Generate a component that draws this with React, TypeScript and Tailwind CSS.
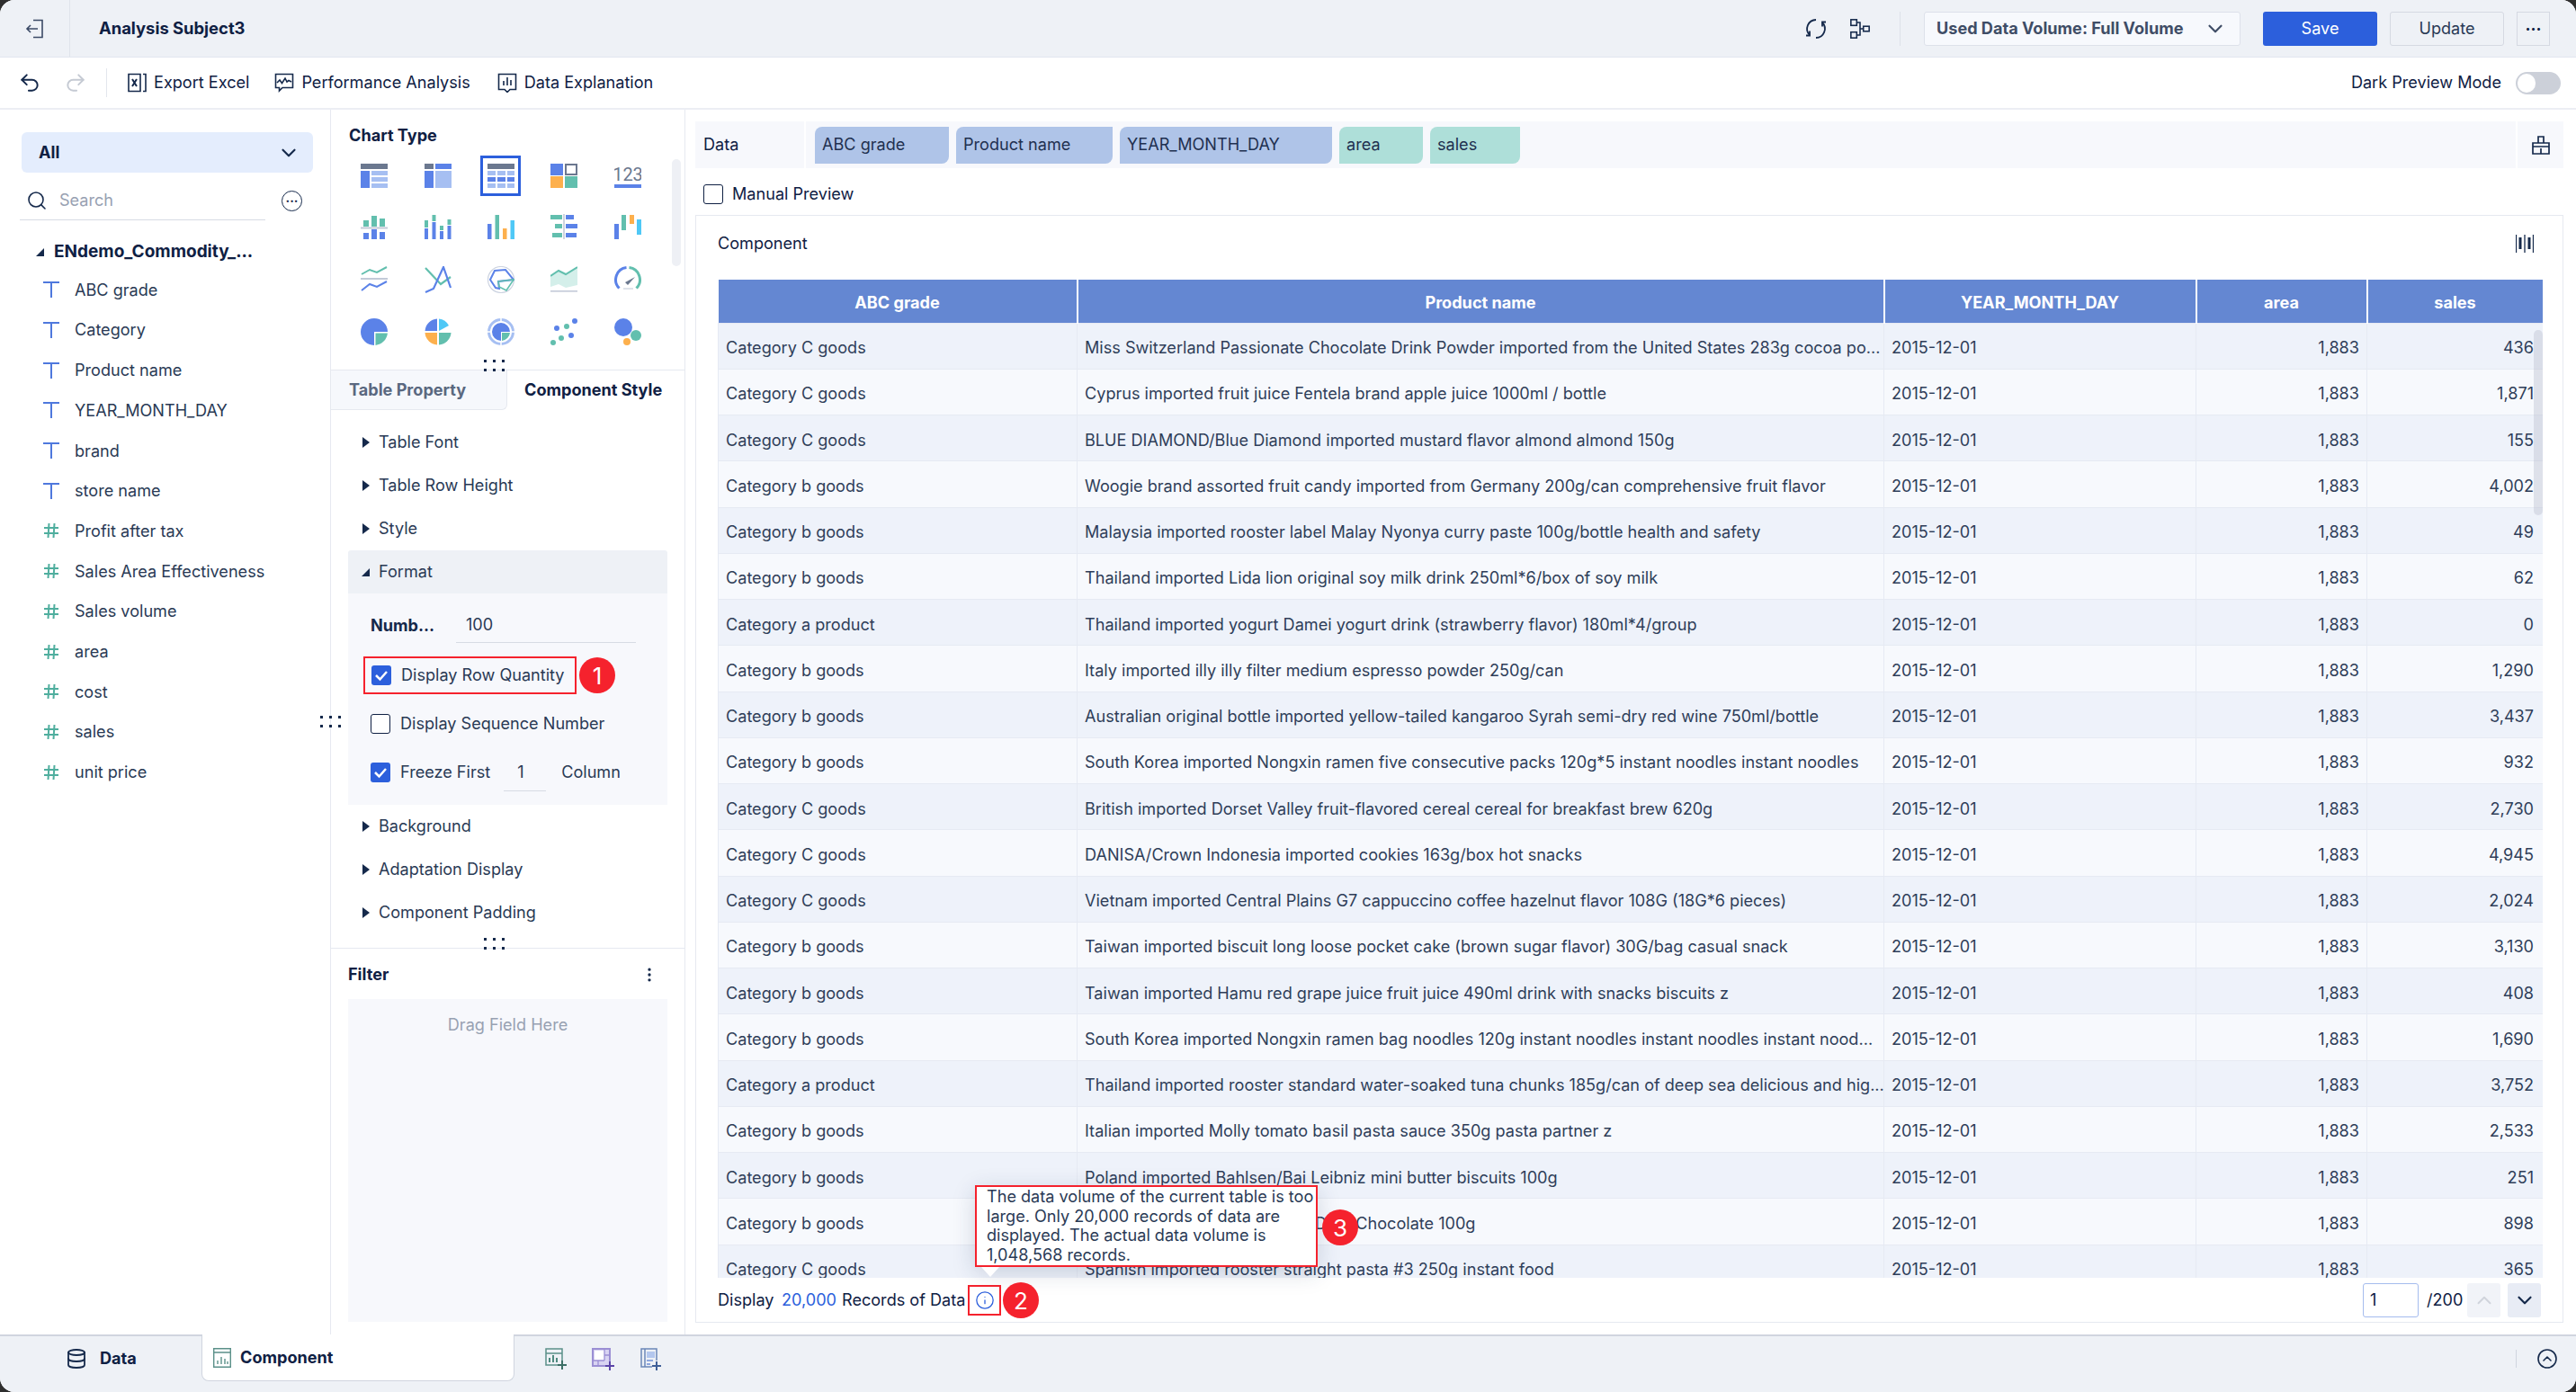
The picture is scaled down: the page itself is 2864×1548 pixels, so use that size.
import type { ReactNode } from 'react'
import { ChevronDown, ChevronUp, Search, Undo2, Redo2, Database, Info, CircleChevronUp, EllipsisVertical } from 'lucide-react'

const B = '#5b82e8'
const L = '#a6bff2'
const G = '#6b788f'
const T = '#62bfae'
const O = '#fdb04d'
const C = '#4fc8f6'

const chartIcons: ReactNode[] = [
  <><rect width="30" height="6" y="1" fill={G} /><rect y="9" width="10" height="19" fill={B} /><rect x="12" y="9" width="18" height="5" fill={L} /><rect x="12" y="16" width="18" height="5" fill={L} /><rect x="12" y="23" width="18" height="5" fill={L} /></>,
  <><rect y="1" width="10" height="6" fill={G} /><rect x="12" y="1" width="18" height="6" fill={B} /><rect y="9" width="10" height="19" fill={B} /><rect x="12" y="9" width="18" height="19" fill={L} /></>,
  <><rect width="30" height="6" y="1" fill={G} />{[9, 16, 23].map(y => [0, 11, 22].map(x => <rect key={`${x}-${y}`} x={x} y={y} width="9" height="5" fill={y === 16 ? B : L} />))}</>,
  <><rect y="1" width="14" height="13" fill={B} /><rect x="17" y="2" width="12" height="11" fill="none" stroke={G} strokeWidth="2" /><rect y="15" width="14" height="13" fill={O} /><rect x="16" y="15" width="14" height="13" fill={T} /></>,
  <><text x="15" y="20" textAnchor="middle" fontSize="20" fill={G} fontFamily="Roboto, sans-serif">123</text><rect y="24" width="30" height="4" fill={B} /></>,
  <><rect x="3" y="7" width="6" height="7" fill={T} /><rect x="12" y="2" width="6" height="12" fill={T} /><rect x="21" y="5" width="6" height="9" fill={T} /><rect y="14.500" width="30" height="2" fill="#c3cad8" /><rect x="3" y="21" width="6" height="7" fill={B} /><rect x="12" y="17" width="6" height="11" fill={B} /><rect x="21" y="20" width="6" height="8" fill={B} /></>,
  <><rect y="7" width="4" height="8" fill={T} /><rect y="16" width="4" height="12" fill={B} /><rect x="8.500" y="1" width="4" height="7" fill={T} /><rect x="8.500" y="9" width="4" height="19" fill={B} /><rect x="17" y="13" width="4" height="5" fill={T} /><rect x="17" y="19" width="4" height="9" fill={B} /><rect x="25.500" y="6" width="4" height="6" fill={T} /><rect x="25.500" y="13" width="4" height="15" fill={B} /></>,
  <><rect y="11" width="4.500" height="17" fill={B} /><rect x="8.500" y="1" width="4.500" height="27" fill={T} /><rect x="17" y="16" width="4.500" height="12" fill={O} /><rect x="25.500" y="7" width="4.500" height="21" fill={C} /></>,
  <><rect y="1" width="13" height="5" fill={T} /><rect x="17" y="1" width="9" height="5" fill={B} /><rect x="5" y="11" width="8" height="5" fill={T} /><rect x="17" y="11" width="13" height="5" fill={B} /><rect x="2" y="21" width="11" height="5" fill={T} /><rect x="17" y="21" width="12" height="5" fill={B} /><rect x="14.200" width="1.600" height="28" fill="#c3cad8" /></>,
  <><rect y="11" width="5" height="17" fill={B} /><rect x="8" y="1" width="5" height="17" fill={T} /><rect x="17" y="1" width="5" height="10" fill={O} /><rect x="25" y="6" width="5" height="17" fill={C} /></>,
  <><path d="M1 9l9-5 8 3 11-6" fill="none" stroke={T} strokeWidth="2" /><rect y="13" width="30" height="2" fill="#c3cad8" /><path d="M1 27l9-7 8 3 11-6" fill="none" stroke={B} strokeWidth="2" /></>,
  <><path d="M1 2l17 18 11-8" fill="none" stroke={T} strokeWidth="2.200" /><path d="M1 29l9-4 11-24 8 23" fill="none" stroke={B} strokeWidth="2.200" /></>,
  <><circle cx="15" cy="15" r="14.500" fill="none" stroke="#ccd3e0" strokeWidth="1.200" /><path d="M3 15L8 5 20 4 29 15 12 17 13 25 9 24z" fill="none" stroke={B} strokeWidth="2" /><path d="M12 17L29 15 21 27 13 23z" fill="none" stroke={T} strokeWidth="1.600" /></>,
  <><path d="M0 11l9-6 8 4 13-8v20l-13 3-8-4-9 3z" fill="#d4efea" /><path d="M0 11l9-6 8 4 13-8" fill="none" stroke={T} strokeWidth="2" /><rect y="27" width="30" height="1.600" fill="#c3cad8" /></>,
  <><path d="M5.500 24.500A13.500 13.500 0 0 1 13.500 1.600" fill="none" stroke={B} strokeWidth="3" /><path d="M16.500 1.600A13.500 13.500 0 0 1 24.500 24.500" fill="none" stroke={T} strokeWidth="3" /><path d="M12 18l11-6-8 9z" fill={G} /><rect x="10" y="24" width="11" height="2" fill="#dfe3ea" /></>,
  <><path d="M15 0A15 15 0 1 0 15 30V15H30A15 15 0 0 0 15 0Z" fill={B} /><path d="M16.500 16.500H29.900A15 15 0 0 1 16.500 29.900Z" fill={T} /></>,
  <><path d="M14 .500A14.500 14.500 0 0 0 .500 14H14z" fill={B} /><path d="M16 .500A14.500 14.500 0 0 1 27 8l-11 6z" fill={C} /><path d="M.500 16A14.500 14.500 0 0 0 14 29.500V16z" fill={O} /><path d="M16 16H29.500A14.500 14.500 0 0 1 16 29.500z" fill={T} /></>,
  <><circle cx="15" cy="15" r="13.500" fill="none" stroke={L} strokeWidth="3" /><path d="M15 5A10 10 0 1 0 15 25V15H25A10 10 0 0 0 15 5Z" fill={B} /><path d="M16 16H25A10 10 0 0 1 16 25z" fill={T} /><path d="M15 0v3M15 27v3M0 15h3M27 15h3" stroke="#fff" strokeWidth="1.500" /></>,
  <><circle cx="27" cy="3" r="3" fill={B} /><circle cx="18" cy="9" r="3" fill={T} /><circle cx="7" cy="11" r="3" fill={B} /><circle cx="23" cy="19" r="3" fill={B} /><circle cx="12" cy="22" r="3" fill={T} /><circle cx="3" cy="27" r="3" fill={T} /></>,
  <><circle cx="10" cy="10" r="10" fill={B} /><circle cx="24" cy="19" r="6" fill={T} /><circle cx="14" cy="26" r="4" fill={O} /></>,
]

const fields = [
  ['T', 'ABC grade'], ['T', 'Category'], ['T', 'Product name'], ['T', 'YEAR_MONTH_DAY'], ['T', 'brand'], ['T', 'store name'],
  ['#', 'Profit after tax'], ['#', 'Sales Area Effectiveness'], ['#', 'Sales volume'], ['#', 'area'], ['#', 'cost'], ['#', 'sales'], ['#', 'unit price'],
]

const rows = [
  ['Category C goods', 'Miss Switzerland Passionate Chocolate Drink Powder imported from the United States 283g cocoa po...', '436'],
  ['Category C goods', 'Cyprus imported fruit juice Fentela brand apple juice 1000ml / bottle', '1,871'],
  ['Category C goods', 'BLUE DIAMOND/Blue Diamond imported mustard flavor almond almond 150g', '155'],
  ['Category b goods', 'Woogie brand assorted fruit candy imported from Germany 200g/can comprehensive fruit flavor', '4,002'],
  ['Category b goods', 'Malaysia imported rooster label Malay Nyonya curry paste 100g/bottle health and safety', '49'],
  ['Category b goods', 'Thailand imported Lida lion original soy milk drink 250ml*6/box of soy milk', '62'],
  ['Category a product', 'Thailand imported yogurt Damei yogurt drink (strawberry flavor) 180ml*4/group', '0'],
  ['Category b goods', 'Italy imported illy illy filter medium espresso powder 250g/can', '1,290'],
  ['Category b goods', 'Australian original bottle imported yellow-tailed kangaroo Syrah semi-dry red wine 750ml/bottle', '3,437'],
  ['Category b goods', 'South Korea imported Nongxin ramen five consecutive packs 120g*5 instant noodles instant noodles', '932'],
  ['Category C goods', 'British imported Dorset Valley fruit-flavored cereal cereal for breakfast brew 620g', '2,730'],
  ['Category C goods', 'DANISA/Crown Indonesia imported cookies 163g/box hot snacks', '4,945'],
  ['Category C goods', 'Vietnam imported Central Plains G7 cappuccino coffee hazelnut flavor 108G (18G*6 pieces)', '2,024'],
  ['Category b goods', 'Taiwan imported biscuit long loose pocket cake (brown sugar flavor) 30G/bag casual snack', '3,130'],
  ['Category b goods', 'Taiwan imported Hamu red grape juice fruit juice 490ml drink with snacks biscuits z', '408'],
  ['Category b goods', 'South Korea imported Nongxin ramen bag noodles 120g instant noodles instant noodles instant nood...', '1,690'],
  ['Category a product', 'Thailand imported rooster standard water-soaked tuna chunks 185g/can of deep sea delicious and hig...', '3,752'],
  ['Category b goods', 'Italian imported Molly tomato basil pasta sauce 350g pasta partner z', '2,533'],
  ['Category b goods', 'Poland imported Bahlsen/Bai Leibniz mini butter biscuits 100g', '251'],
  ['Category b goods', 'German imported Ritter Sport Dark Chocolate 100g', '898'],
  ['Category C goods', 'Spanish imported rooster straight pasta #3 250g instant food', '365'],
]

function Badge({ n, className }: { n: number; className: string }) {
  return (
    <div className={`absolute w-[40px] h-[40px] rounded-full bg-[#f5222d] text-white text-[26px] flex items-center justify-center ${className}`}>
      {n}
    </div>
  )
}

function Checkbox({ checked }: { checked?: boolean }) {
  return checked ? (
    <span className="w-[22px] h-[22px] rounded-[3px] bg-[#2c5fdc] flex items-center justify-center shrink-0">
      <svg width="16" height="14" viewBox="0 0 16 14"><path d="M2 7l4.500 4.500L14 3" fill="none" stroke="#fff" strokeWidth="2.500" /></svg>
    </span>
  ) : (
    <span className="w-[22px] h-[22px] rounded-[3px] border border-[#0f2043] bg-white shrink-0" />
  )
}

function Arrow({ open }: { open?: boolean }) {
  return open ? (
    <svg width="9" height="10" viewBox="0 0 9 10"><path d="M9 1v9H0z" fill="#15294b" /></svg>
  ) : (
    <svg width="8" height="12" viewBox="0 0 8 12"><path d="M0 0l8 6-8 6z" fill="#15294b" /></svg>
  )
}

function Collapse({ label }: { label: string }) {
  return (
    <div className="h-[48px] flex items-center pl-[16px] text-[#2a3a55]">
      <span className="w-[18px]"><Arrow /></span>
      {label}
    </div>
  )
}

function DragDots({ className }: { className: string }) {
  return (
    <div className={`absolute grid grid-cols-3 gap-x-[7px] gap-y-[7px] ${className}`}>
      {[0, 1, 2, 3, 4, 5].map(i => <span key={i} className="w-[3px] h-[3px] bg-[#15294b]" />)}
    </div>
  )
}

export default function App() {
  return (
    <div className="w-[2864px] h-[1548px] bg-[#2e2e2e] overflow-hidden font-['Inter',sans-serif] text-[18.1px] text-[#0f2043]">
      <div className="w-full h-full rounded-[16px] overflow-hidden bg-white flex flex-col">
        {/* Title bar */}
        <div className="h-[64px] shrink-0 bg-[#eef1f6] border-b border-[#e2e6ef] flex items-center">
          <div className="w-[78px] h-full border-r border-[#dfe3eb] flex items-center justify-center">
            <svg width="22" height="22" viewBox="0 0 22 22" fill="none" stroke="#3b4a66" strokeWidth="1.600"><path d="M9 1.500h10v19H9M14 11H2M6 7l-4 4 4 4" /></svg>
          </div>
          <span className="ml-[32px] font-bold text-[18.4px]">Analysis Subject3</span>
          <div className="ml-auto flex items-center h-full">
            <svg width="26" height="26" viewBox="0 0 26 26" fill="none" stroke="#15294b" strokeWidth="1.800"><path d="M13 3a10 10 0 0 0-7 17M13 23a10 10 0 0 0 7-17" /><path d="M6 15.500V20.500H2M20 10.500V5.500h4" /></svg>
            <svg className="ml-[24px]" width="24" height="24" viewBox="0 0 26 26" fill="none" stroke="#15294b" strokeWidth="1.700"><rect x="2" y="2" width="7" height="7" /><rect x="2" y="17" width="7" height="7" /><rect x="17" y="10" width="7" height="6" /><path d="M9 5.500h4v15H9M13 13h4" /></svg>
            <div className="ml-[32px] w-px h-[38px] bg-[#dde1e9]" />
            <div className="ml-[26px] w-[352px] h-[38px] bg-[#f7f9fd] border border-[#dde1ea] rounded-[3px] flex items-center pl-[13px] pr-[14px] text-[#3f4d66] font-bold">
              Used Data Volume: Full Volume
              <ChevronDown className="ml-auto" size={26} color="#3f4d66" />
            </div>
            <button className="ml-[25px] w-[127px] h-[38px] bg-[#2c5fdc] text-white rounded-[3px]">Save</button>
            <button className="ml-[14px] w-[127px] h-[38px] border border-[#d5d9e2] rounded-[3px] text-[#2a3a55]">Update</button>
            <button className="ml-[14px] w-[37px] h-[38px] border border-[#d5d9e2] font-bold leading-none pb-[8px]">...</button>
            <div className="w-[29px]" />
          </div>
        </div>

        {/* Toolbar */}
        <div className="h-[58px] shrink-0 border-b-2 border-[#eceef4] flex items-center">
          <Undo2 className="ml-[20px]" size={26} color="#15294b" strokeWidth={1.800} />
          <Redo2 className="ml-[25px]" size={26} color="#c5cad3" strokeWidth={1.800} />
          <div className="ml-[21px] w-px h-[32px] bg-[#e3e6ed]" />
          <svg className="ml-[22px]" width="22" height="22" viewBox="0 0 22 22" fill="none" stroke="#15294b" strokeWidth="1.600"><path d="M15 1.500H2v19h13zM18 1.500h3v19h-3" /><path d="M6 7l5 8M11 7l-5 8" strokeWidth="2" /></svg>
          <span className="ml-[8px]">Export Excel</span>
          <svg className="ml-[28px]" width="22" height="22" viewBox="0 0 22 22" fill="none" stroke="#15294b" strokeWidth="1.600"><path d="M1.500 1.500h19v15H9l-3.500 3.500v-3.500h-4zM3 11l3-3 2.500 3.500L12 6l2 4 2-1.500 3 1.500" /></svg>
          <span className="ml-[8px]">Performance Analysis</span>
          <svg className="ml-[30px]" width="22" height="22" viewBox="0 0 22 22" fill="none" stroke="#15294b" strokeWidth="1.600"><path d="M1.500 1.500h19v17H14l-3 3-3-3H1.500zM7 9v5M11 5v9M15 8v6" /></svg>
          <span className="ml-[8px]">Data Explanation</span>
          <span className="ml-auto">Dark Preview Mode</span>
          <div className="ml-[16px] mr-[17px] w-[50px] h-[25px] rounded-full bg-[#ccd0d9] flex items-center pl-[2px]">
            <span className="w-[20px] h-[21px] rounded-full bg-white" />
          </div>
        </div>

        {/* Main */}
        <div className="flex-1 flex min-h-0">
          {/* Field panel */}
          <div className="relative w-[368px] shrink-0 border-r border-[#e6e9f0] pt-[25px]">
            <div className="mx-[24px] w-[324px] h-[45px] bg-[#e4edfd] rounded-[6px] flex items-center pl-[19px] pr-[14px] font-bold">
              All
              <ChevronDown className="ml-auto" size={26} color="#15294b" />
            </div>
            <div className="mt-[9px] ml-[22px] flex items-center">
              <div className="w-[273px] h-[44px] border-b border-[#d7dbe4] flex items-center pl-[7px]">
                <Search size={24} color="#15294b" strokeWidth={1.600} />
                <span className="ml-[13px] text-[#98a1b2]">Search</span>
              </div>
              <div className="ml-[18px] w-[23px] h-[23px] rounded-full border-[1.5px] border-[#15294b] flex items-center justify-center text-[14px] leading-none pb-[6px] font-bold">...</div>
            </div>
            <div className="mt-[14px] h-[42px] flex items-center pl-[40px] font-bold text-[19px]">
              <span className="w-[20px]"><Arrow open /></span>ENdemo_Commodity_...
            </div>
            {fields.map(([t, name]) => (
              <div key={name} className="h-[44.7px] flex items-center pl-[46px] text-[#2a3a55] -translate-y-[1px]">
                {t === 'T' ? (
                  <svg className="w-[22px] mr-[15px]" width="20" height="20" viewBox="0 0 20 20" fill="none" stroke="#4e78dd" strokeWidth="2"><path d="M1 2h18M10 2v17" /></svg>
                ) : (
                  <svg className="w-[22px] mr-[15px]" width="20" height="20" viewBox="0 0 20 20" fill="none" stroke="#4fae9e" strokeWidth="2"><path d="M2 7h16M2 13h16M7.500 2l-1 16M13.500 2l-1 16" /></svg>
                )}
                {name}
              </div>
            ))}
            <DragDots className="top-[674px] right-[-12px]" />
          </div>

          {/* Settings panel */}
          <div className="w-[394px] shrink-0 border-r border-[#e6e9f0] flex flex-col">
            <div className="relative h-[289px] shrink-0 pt-[15px] pl-[13px]">
              <div className="h-[28px] ml-[7px] flex items-center font-bold">Chart Type</div>
              <div className="mt-[2px] grid grid-cols-5 w-[352px] auto-rows-[57.6px]">
                {chartIcons.map((icon, i) => (
                  <div key={i} className="flex items-center justify-center">
                    <div className={i === 2 ? 'w-[45px] h-[45px] border-[3px] border-[#2c5fdc] flex items-center justify-center' : 'flex'}>
                      <svg width="30" height="30" viewBox="0 0 30 30">{icon}</svg>
                    </div>
                  </div>
                ))}
              </div>
              <div className="absolute left-[379px] top-[55px] w-[10px] h-[119px] rounded-full bg-[#eef0f5]" />
              <DragDots className="top-[278px] left-[170px] z-10" />
            </div>
            <div className="h-[45px] shrink-0 flex border-t border-[#e6e9f0]">
              <div className="w-[196px] bg-[#f6f8fc] border-b border-r border-[#e6e9f0] rounded-br-[6px] flex items-center pl-[20px] font-bold text-[#5a6880]">Table Property</div>
              <div className="flex-1 flex items-center pl-[19px] font-bold">Component Style</div>
            </div>
            <div className="mt-[12px] mx-[19px]">
              <Collapse label="Table Font" />
              <Collapse label="Table Row Height" />
              <Collapse label="Style" />
              <div className="h-[48px] flex items-center pl-[15px] bg-[#eef1f6] rounded-t-[3px] text-[#2a3a55]">
                <span className="w-[19px]"><Arrow open /></span>Format
              </div>
              <div className="h-[235px] bg-[#f7f8fc] pt-[15px] pl-[25px] text-[#2a3a55]">
                <div className="h-[40px] flex">
                  <span className="w-[95px] pt-[7px] font-bold text-[#15294b]">Numb...</span>
                  <span className="w-[200px] border-b border-[#d7dbe4] pl-[11px] pt-[6px]">100</span>
                </div>
                <div className="relative mt-[15px] -ml-[8px] w-[237px] h-[42px] border-2 border-[#f5222d] flex items-center pl-[7px] gap-[11px] whitespace-nowrap">
                  <Checkbox checked />Display Row Quantity
                  <Badge n={1} className="left-[238px] top-[-1px]" />
                </div>
                <div className="mt-[12px] h-[42px] flex items-center gap-[11px]">
                  <Checkbox />Display Sequence Number
                </div>
                <div className="mt-[12px] h-[42px] flex items-center gap-[11px]">
                  <Checkbox checked />Freeze First
                  <span className="ml-[4px] w-[47px] h-[42px] border-b border-[#d7dbe4] pl-[15px] flex items-center">1</span>
                  <span className="ml-[6px]">Column</span>
                </div>
              </div>
              <Collapse label="Background" />
              <Collapse label="Adaptation Display" />
              <Collapse label="Component Padding" />
            </div>
            <div className="relative mt-[15px] border-t border-[#e6e9f0] flex-1 flex flex-col px-[19px]">
              <DragDots className="top-[-12px] left-[170px]" />
              <div className="h-[56px] shrink-0 flex items-center font-bold pt-[2px]">
                Filter
                <EllipsisVertical className="ml-auto mr-[10px]" size={20} color="#15294b" />
              </div>
              <div className="h-[359px] bg-[#f7f8fc] flex justify-center pt-[15px] text-[#98a1b2]">Drag Field Here</div>
            </div>
          </div>

          {/* Preview */}
          <div className="flex-1 min-w-0 pl-[11px] pr-[14px] pt-[13px] pb-[13px] flex flex-col">
            <div className="h-[52px] shrink-0 bg-[#f7f8fc] flex items-center">
              <div className="w-[123px] h-full flex items-center pl-[9px] border-r-2 border-white">Data</div>
              <div className="flex-1 flex items-center gap-[8px] pl-[10px]">
                {[['ABC grade', 149, 0], ['Product name', 174, 0], ['YEAR_MONTH_DAY', 236, 0], ['area', 93, 1], ['sales', 100, 1]].map(([t, w, m]) => (
                  <span key={t as string} style={{ width: w as number }} className={`h-[41px] flex items-center pl-[8px] rounded-tl-[8px] rounded-br-[8px] text-[#1f3050] ${m ? 'bg-[#aedfd9]' : 'bg-[#afc4e8]'}`}>{t}</span>
                ))}
              </div>
              <div className="w-[53px] h-full border-l-2 border-white flex items-center justify-center">
                <svg width="22" height="22" viewBox="0 0 22 22" fill="none" stroke="#15294b" strokeWidth="1.700"><path d="M2 9h18v12H2zM2 13h18M8 9V2h6v7M11 15v6" /></svg>
              </div>
            </div>
            <div className="h-[52px] shrink-0 flex items-center pl-[9px] pt-[5px] gap-[10px]">
              <Checkbox />Manual Preview
            </div>
            <div className="relative flex-1 min-h-0 border border-[#e6e9f0] flex flex-col pl-[24px] pr-[22px]">
              <div className="h-[71px] shrink-0 flex items-center justify-between pb-[10px]">
                Component
                <svg width="20" height="20" viewBox="0 0 20 20" className="mr-[10px]" stroke="#15294b"><path d="M.5 0v20M10 0v20M19.500 0v20" strokeWidth="1.300" /><path d="M5 3v13M15 3v13" strokeWidth="3" /></svg>
              </div>
              <div className="relative flex-1 min-h-0 overflow-hidden">
                <table className="w-[2029px] table-fixed border-collapse text-[#2f3e59]">
                  <colgroup>
                    <col className="w-[399px]" /><col className="w-[897px]" /><col className="w-[347px]" /><col className="w-[190px]" /><col className="w-[196px]" />
                  </colgroup>
                  <thead>
                    <tr className="h-[48px] bg-[#6487d2] text-white">
                      {['ABC grade', 'Product name', 'YEAR_MONTH_DAY', 'area', 'sales'].map(h => (
                        <th key={h} className="font-bold pt-[3px] border-r-2 border-white">{h}</th>
                      ))}
                    </tr>
                  </thead>
                  <tbody>
                    {rows.map((r, i) => (
                      <tr key={i} className={`h-[51.26px] ${i % 2 === 0 ? 'bg-[#eef2fa]' : 'bg-[#f7f9fd]'}`}>
                        <td className="border border-[#e6eaf3] px-[8px] pt-[4px]">{r[0]}</td>
                        <td className="border border-[#e6eaf3] px-[8px] pt-[4px] whitespace-nowrap overflow-hidden">{r[1]}</td>
                        <td className="border border-[#e6eaf3] px-[8px] pt-[4px]">2015-12-01</td>
                        <td className="border border-[#e6eaf3] px-[8px] pt-[4px] text-right">1,883</td>
                        <td className="border border-[#e6eaf3] pl-[8px] pr-[10px] pt-[4px] text-right">{r[2]}</td>
                      </tr>
                    ))}
                  </tbody>
                </table>
                <div className="absolute right-0 top-[56px] w-[10px] h-[206px] rounded-full bg-[#b8bfce]/40" />
              </div>
              <div className="h-[49px] shrink-0 flex items-center whitespace-nowrap pr-[2px]">
                <span className="w-[71px]">Display</span><span className="w-[67px] text-[#2c5fdc]">20,000</span><span className="w-[140px]">Records of Data</span>
                <div className="w-[37px] h-[34px] border-2 border-[#f5222d] flex items-center justify-center">
                  <Info size={22} color="#2c5fdc" strokeWidth={1.400} />
                </div>
                <div className="ml-auto w-[62px] h-[38px] border border-[#a5bcee] rounded-[3px] flex items-center pl-[7px]">1</div>
                <span className="ml-[9px] w-[45px]">/200</span>
                <div className="w-[37px] h-[38px] bg-[#f1f3f8] rounded-[3px] flex items-center justify-center"><ChevronUp size={26} color="#d0d4dc" strokeWidth={1.800} /></div>
                <div className="ml-[8px] w-[37px] h-[38px] bg-[#e8ecf5] rounded-[3px] flex items-center justify-center"><ChevronDown size={26} color="#15294b" strokeWidth={2} /></div>
              </div>
              {/* Tooltip */}
              <div className="absolute left-[310px] top-[1078px] w-[381px] h-[91px] bg-white border-2 border-[#f5222d] shadow-[0_6px_24px_rgba(30,50,90,0.18)] pl-[11px] leading-[21.7px] text-[#2a3a55] whitespace-nowrap">
                The data volume of the current table is too<br />large. Only 20,000 records of data are<br />displayed. The actual data volume is<br />1,048,568 records.
              </div>
              <div className="absolute left-[317px] top-[1169px] w-0 h-0 border-x-[10px] border-x-transparent border-t-[11px] border-t-white" />
              <Badge n={2} className="left-[341px] top-[1186px]" />
              <Badge n={3} className="left-[696px] top-[1105px]" />
            </div>
          </div>
        </div>

        {/* Bottom bar */}
        <div className="h-[64px] shrink-0 bg-[#eef1f6] border-t-2 border-[#d0d5df] flex items-start relative">
          <div className="w-[224px] h-[50px] flex items-center pl-[73px] font-bold">
            <Database size={24} color="#15294b" strokeWidth={1.800} />
            <span className="ml-[14px]">Data</span>
          </div>
          <div className="-mt-[2px] w-[348px] h-[52px] bg-white border border-t-0 border-[#d0d5df] rounded-b-[8px] flex items-center pl-[12px] font-bold">
            <svg width="20" height="22" viewBox="0 0 20 22" fill="none" stroke="#5b9089" strokeWidth="1.400"><path d="M.7.700h18.600v20.600H.700zM.7 5h18.600M5 18v-4M9 18v-8M13 18v-6M16 18v-3" /></svg>
            <span className="ml-[10px]">Component</span>
          </div>
          <div className="h-[50px] flex items-center ml-[34px] gap-[28px]">
            <svg width="24" height="25" viewBox="0 0 24 25" fill="none" stroke="#5b9089" strokeWidth="1.500"><path d="M14 19H1V1h18v13M1 6h18" /><path d="M5 16v-5M9 16V8M13 16v-5" stroke="#4f8a80" strokeWidth="2" /><path d="M19 14v10M14 19h10" stroke="#3c6f66" strokeWidth="2" /></svg>
            <svg width="25" height="25" viewBox="0 0 25 25" fill="#d8d3f2" stroke="#9b8fd4" strokeWidth="2"><rect x="1" y="1" width="19" height="19" /><rect x="3" y="3" width="11" height="11" fill="#fff" stroke="none" /><path d="M14 1v13M14 8h6M1 14h13M7 14v6" fill="none" strokeWidth="1.300" /><path d="M20 15v10M15 20h10" stroke="#5b45a8" strokeWidth="2" /></svg>
            <svg width="24" height="25" viewBox="0 0 24 25" fill="none" stroke="#6b86b8" strokeWidth="1.500"><path d="M14 21H2V1h17v13M6 1v20" /><rect x="8" y="4" width="9" height="7" fill="#b3c7ee" stroke="none" /><path d="M8 14h7M8 18h4" stroke="#6d8fd6" /><path d="M19 15v10M14 20h10" stroke="#3f5f98" strokeWidth="2" /></svg>
          </div>
          <div className="ml-auto h-[50px] flex items-center">
            <div className="w-px h-[20px] bg-[#d0d5df]" />
            <CircleChevronUp className="ml-[22px] mr-[20px]" size={24} color="#15294b" strokeWidth={1.600} />
          </div>
        </div>
      </div>
    </div>
  )
}
